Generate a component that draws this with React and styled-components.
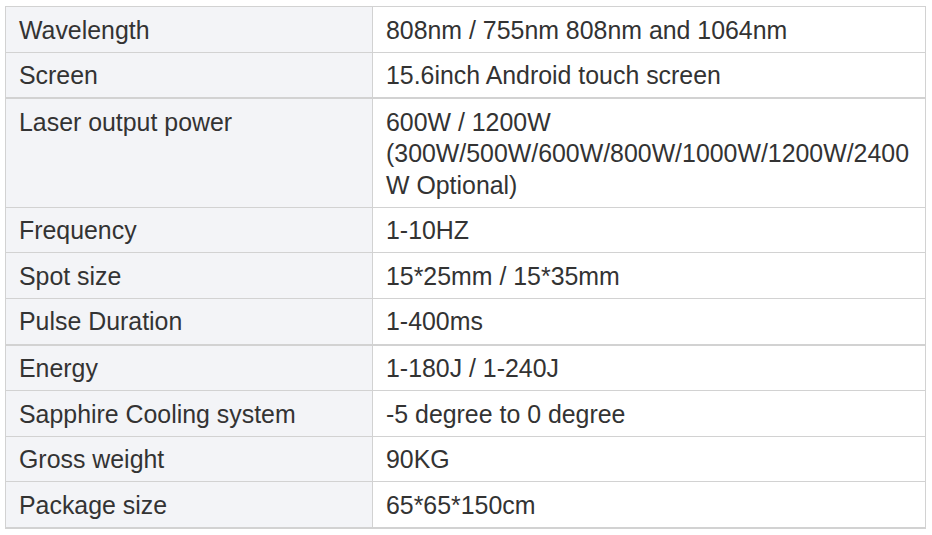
import styled, { createGlobalStyle } from "styled-components";

const GlobalStyle = createGlobalStyle`
  html, body {
    margin: 0;
    padding: 0;
    background: #ffffff;
  }
  body {
    font-family: "Liberation Sans", Arial, sans-serif;
  }
`;

const specs = [
  ["Wavelength", "808nm / 755nm 808nm and 1064nm"],
  ["Screen", "15.6inch Android touch screen"],
  ["Laser output power", "600W / 1200W (300W/500W/600W/800W/1000W/1200W/2400W Optional)", true],
  ["Frequency", "1-10HZ"],
  ["Spot size", "15*25mm / 15*35mm"],
  ["Pulse Duration", "1-400ms"],
  ["Energy", "1-180J / 1-240J", true],
  ["Sapphire Cooling system", "-5 degree to 0 degree"],
  ["Gross weight", "90KG"],
  ["Package size", "65*65*150cm"],
];

const App = () => {
  return (
    <>
      <GlobalStyle />
      <Wrapper>
        <Table>
          <colgroup>
            <col style={{ width: "367px" }} />
            <col />
          </colgroup>
          <tbody>
            {specs.map(([label, value, heavy]) => (
              <Row key={label} $heavy={heavy}>
                <Label>{label}</Label>
                <Value>{value}</Value>
              </Row>
            ))}
          </tbody>
        </Table>
      </Wrapper>
    </>
  );
};

export default App;

const Wrapper = styled.div`
  padding: 6px 6px 0 5px;
  width: 921px;
`;

const Table = styled.table`
  width: 100%;
  table-layout: fixed;
  border-collapse: collapse;
  border: 1px solid #d2d2d2;
  border-bottom: 2px solid #d2d2d2;
  color: #333333;
  font-size: 24.9px;
  line-height: 31.5px;
`;

const Row = styled.tr`
  border-top: ${({ $heavy }) => ($heavy ? "2px" : "1px")} solid #d2d2d2;
`;

const Cell = styled.td`
  padding: 7.5px 13px 5.6px 13px;
  vertical-align: top;
  border-right: 1px solid #d2d2d2;
  overflow-wrap: break-word;
`;

const Label = styled(Cell)`
  background: #f3f4f7;
`;

const Value = styled(Cell)`
  background: #ffffff;
`;
